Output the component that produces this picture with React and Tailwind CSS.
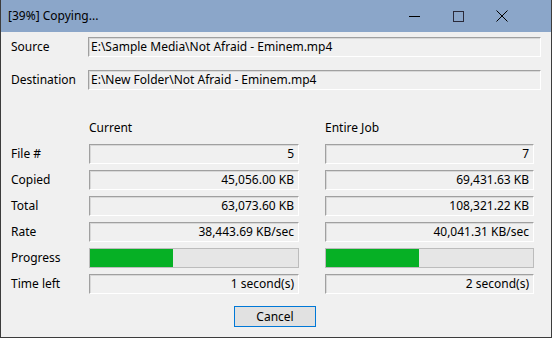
const font = { fontFamily: '"Noto Sans", "Open Sans", sans-serif' };

const sunken =
  "h-[20px] flex items-center border-t border-l border-t-[#a0a0a0] border-l-[#a0a0a0] border-b border-r border-b-white border-r-white shadow-[inset_1px_1px_0_#d8d8d8] bg-[#f0f0f0] text-[12px] text-black";

const Field = ({ children, className = "" }) => (
  <div className={`${sunken} justify-end pr-[4px] ${className}`}>{children}</div>
);

const Progress = ({ pct, className = "" }) => (
  <div className={`h-[20px] border border-[#bcbcbc] bg-[#e6e6e6] ${className}`}>
    <div className="h-full bg-[#06b025]" style={{ width: `${pct}%` }} />
  </div>
);

const rows = [
  ["File #", "5", "7"],
  ["Copied", "45,056.00 KB", "69,431.63 KB"],
  ["Total", "63,073.60 KB", "108,321.22 KB"],
  ["Rate", "38,443.69 KB/sec", "40,041.31 KB/sec"],
];

export default function App() {
  return (
    <div
      className="w-[552px] h-[338px] flex flex-col bg-[#f0f0f0] border-x border-b border-[#3c3c3c] overflow-hidden"
      style={font}
    >
      {/* title bar */}
      <div className="h-[32px] shrink-0 bg-[#8ba6c9] flex items-center pl-[7px] text-[12px] text-black">
        <span>[39%] Copying...</span>
        <div className="ml-auto mr-[27px] flex items-center h-full">
          <div className="w-[44px] h-full flex items-center justify-center">
            <div className="w-[11px] h-px bg-black" />
          </div>
          <div className="w-[44px] h-full flex items-center justify-center">
            <div className="w-[11px] h-[11px] border border-[#2a2a3a]" />
          </div>
          <div className="w-[44px] h-full flex items-center justify-center">
            <svg width="12" height="12" viewBox="0 0 12 12">
              <path d="M0.5 0.5 L11.5 11.5 M11.5 0.5 L0.5 11.5" stroke="#000" strokeWidth="1" />
            </svg>
          </div>
        </div>
      </div>

      <div className="flex flex-col pl-[10px] text-[12px] text-black">
        <div className="flex items-center mt-[5px]">
          <span className="w-[77px]">Source</span>
          <div className={`${sunken} w-[453px] pl-[2px]`}>E:\Sample Media\Not Afraid - Eminem.mp4</div>
        </div>
        <div className="flex items-center mt-[13px]">
          <span className="w-[77px]">Destination</span>
          <div className={`${sunken} w-[453px] pl-[2px]`}>E:\New Folder\Not Afraid - Eminem.mp4</div>
        </div>

        <div className="flex items-center mt-[30px] h-[16px]">
          <span className="w-[78px]" />
          <span className="w-[236px]">Current</span>
          <span>Entire Job</span>
        </div>

        <div className="flex flex-col gap-[6px] mt-[8px]">
          {rows.map(([label, a, b]) => (
            <div key={label} className="flex items-center">
              <span className="w-[78px]">{label}</span>
              <Field className="w-[210px]">{a}</Field>
              <Field className="w-[209px] ml-[26px]">{b}</Field>
            </div>
          ))}
          <div className="flex items-center">
            <span className="w-[78px]">Progress</span>
            <Progress pct={40} className="w-[210px]" />
            <Progress pct={45} className="w-[209px] ml-[26px]" />
          </div>
          <div className="flex items-center">
            <span className="w-[78px]">Time left</span>
            <Field className="w-[210px]">1 second(s)</Field>
            <Field className="w-[209px] ml-[26px]">2 second(s)</Field>
          </div>
        </div>

        <div className="flex mt-[12px]">
          <button className="ml-[223px] w-[82px] h-[21px] border border-[#0078d7] bg-[#e1e1e1] text-[12px] text-black flex items-center justify-center">
            Cancel
          </button>
        </div>
      </div>
    </div>
  );
}
